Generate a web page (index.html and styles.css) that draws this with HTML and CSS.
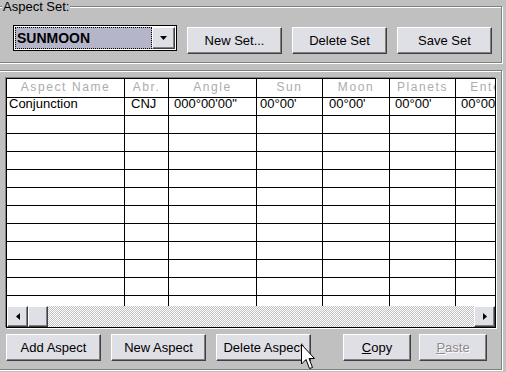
FILE: index.html
```html
<!DOCTYPE html>
<html lang="en">
	<head>
		<title>Aspect Sets</title>
        <meta charset="utf-8">
        <link rel="stylesheet" href="styles.css">
	</head>
	<body>
        <div class="group set-group">
            <div class="group-label">Aspect Set:</div>
            <div class="set-row">
                <div class="combo">
                    <div class="combo-field"><span>SUNMOON</span></div>
                    <div class="combo-btn">
                        <svg width="7" height="4" viewBox="0 0 7 4"><path d="M0 0H7L3.5 4Z" fill="#000"/></svg>
                    </div>
                </div>
                <button class="btn">New Set...</button>
                <button class="btn">Delete Set</button>
                <button class="btn">Save Set</button>
            </div>
        </div>

        <div class="group grid-group">
            <div class="grid">
                <div class="grid-body">
                    <div class="row head">
                        <div class="cell c1">Aspect Name</div>
                        <div class="cell c2">Abr.</div>
                        <div class="cell c3">Angle</div>
                        <div class="cell c4">Sun</div>
                        <div class="cell c5">Moon</div>
                        <div class="cell c6">Planets</div>
                        <div class="cell c7">Enter</div>
                    </div>
                    <div class="row">
                        <div class="cell c1">Conjunction</div>
                        <div class="cell c2">CNJ</div>
                        <div class="cell c3">000°00'00"</div>
                        <div class="cell c4">00°00'</div>
                        <div class="cell c5">00°00'</div>
                        <div class="cell c6">00°00'</div>
                        <div class="cell c7">00°00'</div>
                    </div>
                    <div class="row"><div class="cell c1"></div><div class="cell c2"></div><div class="cell c3"></div><div class="cell c4"></div><div class="cell c5"></div><div class="cell c6"></div><div class="cell c7"></div></div>
                    <div class="row"><div class="cell c1"></div><div class="cell c2"></div><div class="cell c3"></div><div class="cell c4"></div><div class="cell c5"></div><div class="cell c6"></div><div class="cell c7"></div></div>
                    <div class="row"><div class="cell c1"></div><div class="cell c2"></div><div class="cell c3"></div><div class="cell c4"></div><div class="cell c5"></div><div class="cell c6"></div><div class="cell c7"></div></div>
                    <div class="row"><div class="cell c1"></div><div class="cell c2"></div><div class="cell c3"></div><div class="cell c4"></div><div class="cell c5"></div><div class="cell c6"></div><div class="cell c7"></div></div>
                    <div class="row"><div class="cell c1"></div><div class="cell c2"></div><div class="cell c3"></div><div class="cell c4"></div><div class="cell c5"></div><div class="cell c6"></div><div class="cell c7"></div></div>
                    <div class="row"><div class="cell c1"></div><div class="cell c2"></div><div class="cell c3"></div><div class="cell c4"></div><div class="cell c5"></div><div class="cell c6"></div><div class="cell c7"></div></div>
                    <div class="row"><div class="cell c1"></div><div class="cell c2"></div><div class="cell c3"></div><div class="cell c4"></div><div class="cell c5"></div><div class="cell c6"></div><div class="cell c7"></div></div>
                    <div class="row"><div class="cell c1"></div><div class="cell c2"></div><div class="cell c3"></div><div class="cell c4"></div><div class="cell c5"></div><div class="cell c6"></div><div class="cell c7"></div></div>
                    <div class="row"><div class="cell c1"></div><div class="cell c2"></div><div class="cell c3"></div><div class="cell c4"></div><div class="cell c5"></div><div class="cell c6"></div><div class="cell c7"></div></div>
                    <div class="row"><div class="cell c1"></div><div class="cell c2"></div><div class="cell c3"></div><div class="cell c4"></div><div class="cell c5"></div><div class="cell c6"></div><div class="cell c7"></div></div>
                    <div class="row"><div class="cell c1"></div><div class="cell c2"></div><div class="cell c3"></div><div class="cell c4"></div><div class="cell c5"></div><div class="cell c6"></div><div class="cell c7"></div></div>
                    <div class="row"><div class="cell c1"></div><div class="cell c2"></div><div class="cell c3"></div><div class="cell c4"></div><div class="cell c5"></div><div class="cell c6"></div><div class="cell c7"></div></div>
                </div>
                <div class="hscroll">
                    <div class="sb-btn">
                        <svg width="4" height="7" viewBox="0 0 4 7"><path d="M4 0V7L0 3.5Z" fill="#000"/></svg>
                    </div>
                    <div class="sb-thumb"></div>
                    <div class="sb-track"></div>
                    <div class="sb-btn">
                        <svg width="4" height="7" viewBox="0 0 4 7"><path d="M0 0V7L4 3.5Z" fill="#000"/></svg>
                    </div>
                </div>
            </div>
            <div class="actions">
                <button class="btn">Add Aspect</button>
                <button class="btn">New Aspect</button>
                <button class="btn">Delete Aspect</button>
                <div class="clip">
                    <button class="btn small"><u>C</u>opy</button>
                    <button class="btn small disabled"><u>P</u>aste</button>
                </div>
            </div>
        </div>

        <svg class="cursor" width="14" height="26" viewBox="0 0 14 26">
            <path d="M0.5 0.5V20L5 15.5L8.5 24.5L11.5 23.5L8 14.5H13.5Z" fill="#fff" stroke="#000" stroke-width="1"/>
        </svg>
	</body>
</html>
```

FILE: styles.css
```css
html, body {
    margin: 0;
    padding: 0;
}

body {
    width: 506px;
    height: 372px;
    overflow: hidden;
    position: relative;
    background: #c0c0c0;
    font-family: "Liberation Sans", Arial, sans-serif;
    font-size: 13px;
    color: #000;
}

/* etched group boxes */
.group {
    box-sizing: border-box;
    width: 506px;
    margin-left: -4px;
    border: 1px solid #808080;
    box-shadow: inset 1px 1px 0 #fff, 1px 1px 0 #fff;
}

.set-group {
    margin-top: 6px;
    height: 57px;
}

.group-label {
    width: fit-content;
    margin: -7px 0 0 5px;
    padding: 0 1px;
    line-height: 13px;
    background: #c0c0c0;
}

.set-row {
    display: flex;
    align-items: flex-start;
    gap: 10px;
    margin: 12px 0 0 16px;
}

.set-row .btn {
    margin-top: 2px;
}

/* combo box */
.combo {
    box-sizing: border-box;
    width: 164px;
    height: 26px;
    border: 1px solid #000;
    padding: 1px;
    display: flex;
    background: #fff;
}

.combo-field {
    flex: 1;
    display: flex;
    align-items: center;
    background: #b4b5c9;
    outline: 1px dotted #000;
    outline-offset: -1px;
    font-size: 14px;
    font-weight: bold;
    padding-left: 2px;
}

.combo-btn {
    box-sizing: border-box;
    width: 23px;
    display: flex;
    align-items: center;
    justify-content: center;
    background: #dfdfe6;
    border: 1px solid;
    border-color: #fff #404040 #404040 #fff;
    box-shadow: inset -1px -1px 0 #808080;
}

/* push buttons */
.btn {
    box-sizing: border-box;
    width: 95px;
    height: 27px;
    padding: 0;
    background: #dfdfe6;
    border: 1px solid;
    border-color: #fff #404040 #404040 #fff;
    box-shadow: inset -1px -1px 0 #808080;
    font-family: "Liberation Sans", Arial, sans-serif;
    font-size: 13px;
    color: #000;
}

.btn.small {
    width: 68px;
}

.btn.disabled {
    color: #8a8a8a;
    text-shadow: 1px 1px 0 #fff;
}

/* aspect grid */
.grid-group {
    margin-top: 7px;
    height: 300px;
}

.grid {
    box-sizing: border-box;
    width: 490px;
    height: 250px;
    margin: 7px 0 0 9px;
    border: 1px solid #000;
    box-shadow: -1px -1px 0 #808080, 1px 1px 0 #fff;
    background: #fff;
    display: flex;
    flex-direction: column;
}

.grid-body {
    height: 227px;
    overflow: hidden;
}

.row {
    display: flex;
    height: 17px;
    border-bottom: 1px solid #000;
}

.row.head {
    height: 18px;
}

.cell {
    flex: none;
    box-sizing: border-box;
    height: 100%;
    border-right: 1px solid #000;
    padding-left: 5px;
    line-height: 12px;
    white-space: nowrap;
}

.head .cell {
    padding: 0;
    text-align: center;
    color: #acacac;
    font-size: 12px;
    letter-spacing: 1.6px;
    line-height: 17px;
    overflow: hidden;
}

.c1 { width: 118px; padding-left: 2px; }
.c2 { width: 44px; padding-left: 6px; }
.c3 { width: 88px; }
.c4 { width: 66px; padding-left: 3px; }
.c5 { width: 67px; padding-left: 6px; }
.c6 { width: 66px; }
.c7 { width: 66px; }

/* horizontal scroll bar */
.hscroll {
    height: 21px;
    display: flex;
}

.sb-btn,
.sb-thumb {
    box-sizing: border-box;
    width: 21px;
    height: 21px;
    display: flex;
    align-items: center;
    justify-content: center;
    background: #dfdfe6;
    border: 1px solid;
    border-color: #fff #404040 #404040 #fff;
    box-shadow: inset -1px -1px 0 #808080;
}

.sb-thumb {
    width: 20px;
}

.sb-track {
    flex: 1;
    background: repeating-conic-gradient(#c0c0c0 0 25%, #fff 0 50%) 0 0 / 2px 2px;
}

/* bottom buttons */
.actions {
    display: flex;
    gap: 10px;
    margin: 6px 0 0 9px;
}

.clip {
    display: flex;
    gap: 8px;
    margin-left: 22px;
}

.cursor {
    position: absolute;
    left: 301px;
    top: 344px;
}
```
